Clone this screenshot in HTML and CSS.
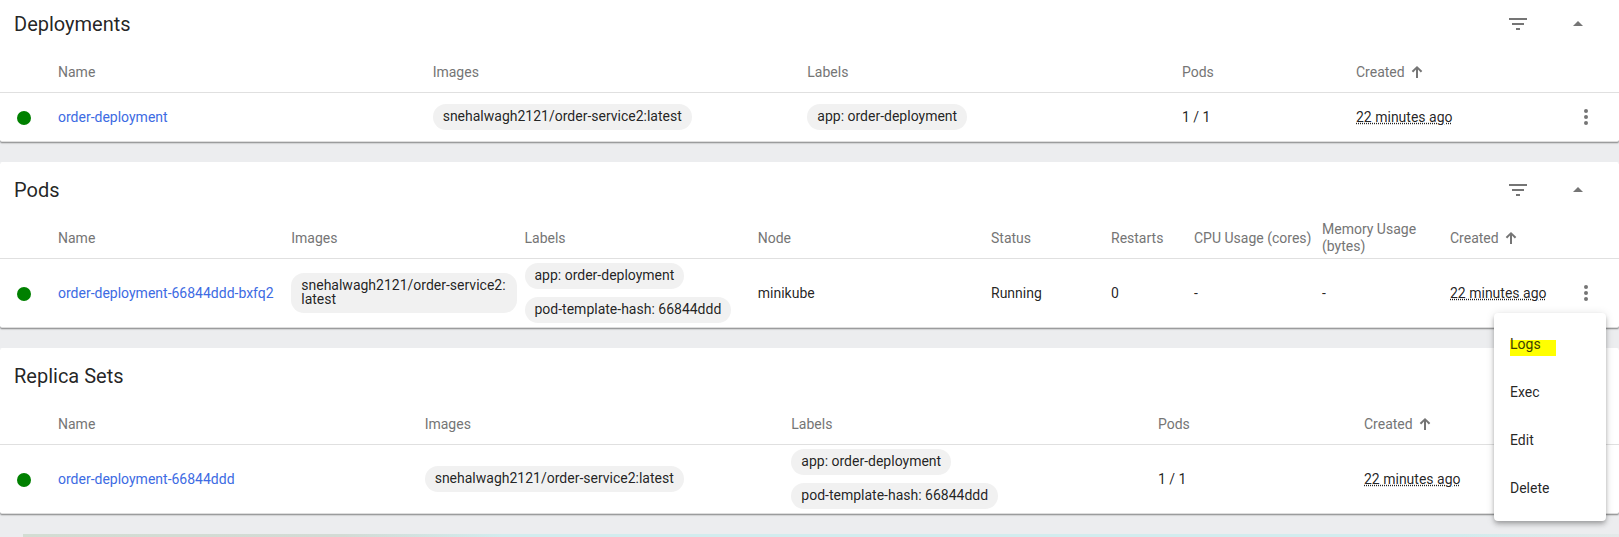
FILE: index.html
```
<!DOCTYPE html>
<html lang="en">
<head>
<meta charset="utf-8">
<title>Workloads</title>
<link rel="stylesheet" href="styles.css">
</head>
<body>
<svg class="sprite" aria-hidden="true">
  <symbol id="filter" viewBox="0 0 24 24"><path d="M10 18h4v-2h-4v2zM3 6v2h18V6H3zm3 7h12v-2H6v2z"/></symbol>
  <symbol id="caret" viewBox="0 0 24 24"><path d="M7 14l5-5 5 5z"/></symbol>
  <symbol id="more" viewBox="0 0 24 24"><path d="M12 8a2 2 0 1 0 0-4 2 2 0 0 0 0 4zm0 2a2 2 0 1 0 0 4 2 2 0 0 0 0-4zm0 6a2 2 0 1 0 0 4 2 2 0 0 0 0-4z"/></symbol>
  <symbol id="sort" viewBox="0 0 12 12"><path d="M5 12V3.600L2.200 6.400.7 5 6 0l5.300 5-1.500 1.400L7 3.600V12z"/></symbol>
</svg>
<main class="page">
  <section class="card">
    <header class="card-header">
      <h2 class="card-title">Deployments</h2>
      <button class="icon-button" aria-label="Filter deployments"><svg class="icon"><use href="#filter"/></svg></button>
      <button class="icon-button" aria-label="Collapse deployments"><svg class="icon"><use href="#caret"/></svg></button>
    </header>
    <table class="table">
      <colgroup><col class="col-status"><col><col><col><col class="col-deploy-pods"><col class="col-deploy-created"><col class="col-menu"></colgroup>
      <thead>
        <tr><th></th><th>Name</th><th>Images</th><th>Labels</th><th>Pods</th><th><span class="sorted">Created<svg class="sort-icon"><use href="#sort"/></svg></span></th><th></th></tr>
      </thead>
      <tbody>
        <tr>
          <td><span class="status"></span></td>
          <td><a class="link" href="#">order-deployment</a></td>
          <td><div class="chips"><span class="chip">snehalwagh2121/order-service2:<wbr>latest</span></div></td>
          <td><div class="chips"><span class="chip">app: order-deployment</span></div></td>
          <td>1 / 1</td>
          <td><span class="age">22 minutes ago</span></td>
          <td class="menu-cell"><button class="icon-button" aria-label="Actions"><svg class="icon"><use href="#more"/></svg></button></td>
        </tr>
      </tbody>
    </table>
  </section>

  <section class="card">
    <header class="card-header">
      <h2 class="card-title">Pods</h2>
      <button class="icon-button" aria-label="Filter pods"><svg class="icon"><use href="#filter"/></svg></button>
      <button class="icon-button" aria-label="Collapse pods"><svg class="icon"><use href="#caret"/></svg></button>
    </header>
    <table class="table">
      <colgroup><col class="col-status"><col><col><col><col><col class="col-pod-status"><col class="col-restarts"><col class="col-usage"><col class="col-usage"><col class="col-pod-created"><col class="col-menu"></colgroup>
      <thead>
        <tr><th></th><th>Name</th><th>Images</th><th>Labels</th><th>Node</th><th>Status</th><th>Restarts</th><th>CPU Usage (cores)</th><th>Memory Usage<br>(bytes)</th><th><span class="sorted">Created<svg class="sort-icon"><use href="#sort"/></svg></span></th><th></th></tr>
      </thead>
      <tbody>
        <tr>
          <td><span class="status"></span></td>
          <td><a class="link" href="#">order-deployment-66844ddd-bxfq2</a></td>
          <td><div class="chips"><span class="chip">snehalwagh2121/order-service2:<wbr>latest</span></div></td>
          <td><div class="chips"><span class="chip">app: order-deployment</span><span class="chip">pod-template-hash: 66844ddd</span></div></td>
          <td>minikube</td>
          <td>Running</td>
          <td>0</td>
          <td>-</td>
          <td>-</td>
          <td><span class="age">22 minutes ago</span></td>
          <td class="menu-cell">
            <button class="icon-button" aria-label="Actions" aria-expanded="true"><svg class="icon"><use href="#more"/></svg></button>
            <div class="menu" role="menu">
              <button class="menu-item" role="menuitem"><span class="highlight">Logs</span></button>
              <button class="menu-item" role="menuitem">Exec</button>
              <button class="menu-item" role="menuitem">Edit</button>
              <button class="menu-item" role="menuitem">Delete</button>
            </div>
          </td>
        </tr>
      </tbody>
    </table>
  </section>

  <section class="card">
    <header class="card-header">
      <h2 class="card-title">Replica Sets</h2>
    </header>
    <table class="table">
      <colgroup><col class="col-status"><col><col><col><col class="col-replica-pods"><col class="col-replica-created"><col class="col-menu"></colgroup>
      <thead>
        <tr><th></th><th>Name</th><th>Images</th><th>Labels</th><th>Pods</th><th><span class="sorted">Created<svg class="sort-icon"><use href="#sort"/></svg></span></th><th></th></tr>
      </thead>
      <tbody>
        <tr>
          <td><span class="status"></span></td>
          <td><a class="link" href="#">order-deployment-66844ddd</a></td>
          <td><div class="chips"><span class="chip">snehalwagh2121/order-service2:<wbr>latest</span></div></td>
          <td><div class="chips"><span class="chip">app: order-deployment</span><span class="chip">pod-template-hash: 66844ddd</span></div></td>
          <td>1 / 1</td>
          <td><span class="age">22 minutes ago</span></td>
          <td></td>
        </tr>
      </tbody>
    </table>
  </section>
  <div class="backdrop"></div>
</main>
</body>
</html>
```
FILE: styles.css
```
* { box-sizing: border-box; }

html { overflow: hidden; }

body {
  margin: 0;
  background: #ecedef;
  color: rgba(0, 0, 0, 0.87);
  font-family: Roboto, "Liberation Sans", sans-serif;
  font-size: 14px;
  line-height: 17px;
}

.sprite { display: none; }

.page {
  display: flex;
  flex-direction: column;
  gap: 20px;
  margin-top: -4px;
}

.card {
  background: #fff;
  border-bottom: 1px solid #dedede;
  border-radius: 2px;
  box-shadow: 0 1px 0 #9b9c9d, 0 2px 1px rgba(0, 0, 0, 0.12);
}

.card-header {
  display: flex;
  align-items: center;
  gap: 20px;
  height: 56px;
  padding: 0 21px 0 14px;
}

.card-title {
  flex: 1;
  margin: 0;
  font-size: 20px;
  font-weight: 400;
  line-height: 24px;
}

.icon-button {
  display: inline-flex;
  align-items: center;
  justify-content: center;
  width: 40px;
  height: 40px;
  padding: 0;
  border: 0;
  background: none;
  color: #757575;
}

.icon {
  width: 24px;
  height: 24px;
  fill: currentColor;
}

.table {
  width: 100%;
  table-layout: fixed;
  border-collapse: separate;
  border-spacing: 0;
}

.col-status { width: 58px; }
.col-menu { width: 66px; }
.col-deploy-pods { width: 174px; }
.col-deploy-created { width: 197px; }
.col-pod-status { width: 120px; }
.col-restarts { width: 83px; }
.col-usage { width: 128px; }
.col-pod-created { width: 103px; }
.col-replica-pods { width: 206px; }
.col-replica-created { width: 189px; }

th {
  height: 41px;
  padding: 0;
  border-bottom: 1px solid #e0e0e0;
  color: #757575;
  font-weight: 400;
  text-align: left;
  white-space: nowrap;
}

td {
  height: 48px;
  padding: 0;
  white-space: nowrap;
}

.sorted {
  display: inline-flex;
  align-items: center;
  gap: 6px;
}

.sort-icon {
  width: 12px;
  height: 12px;
  fill: #757575;
}

.status {
  display: block;
  width: 14px;
  height: 14px;
  margin: 2px 0 0 17px;
  border-radius: 50%;
  background: #008000;
}

.link {
  color: #3d6be3;
  text-decoration: none;
}

.chips {
  display: flex;
  flex-direction: column;
  align-items: flex-start;
  gap: 8px;
  padding: 4px 8px 4px 0;
}

.chip {
  padding: 5px 10px 7px;
  border-radius: 13px;
  background: #f1f1f1;
  line-height: 14px;
  white-space: normal;
}

.age {
  text-decoration: underline dotted;
}

.menu-cell {
  position: relative;
  text-align: center;
  vertical-align: middle;
}

.menu {
  position: absolute;
  z-index: 1;
  top: 54px;
  right: 13px;
  display: flex;
  flex-direction: column;
  width: 112px;
  padding: 8px 0;
  border-radius: 4px;
  background: #fff;
  box-shadow: 0 2px 4px -1px rgba(0, 0, 0, 0.2), 0 4px 5px rgba(0, 0, 0, 0.14), 0 1px 10px rgba(0, 0, 0, 0.12);
}

.menu-item {
  height: 48px;
  padding: 0 16px 2px;
  border: 0;
  background: none;
  color: rgba(0, 0, 0, 0.87);
  font: inherit;
  line-height: 16px;
  text-align: left;
}

.highlight {
  display: block;
  width: 46px;
  padding: 4px 0;
  background: linear-gradient(#ff0, #ff0) 0 8px / 46px 16px no-repeat;
  color: #3d3d00;
}

.backdrop {
  height: 3px;
  margin-left: 23px;
  background: linear-gradient(90deg, #d3ddd3, #d3dbd5 20%, #d2ecee 30%, #d2ecee 90%, #e4e9e9);
}
```
